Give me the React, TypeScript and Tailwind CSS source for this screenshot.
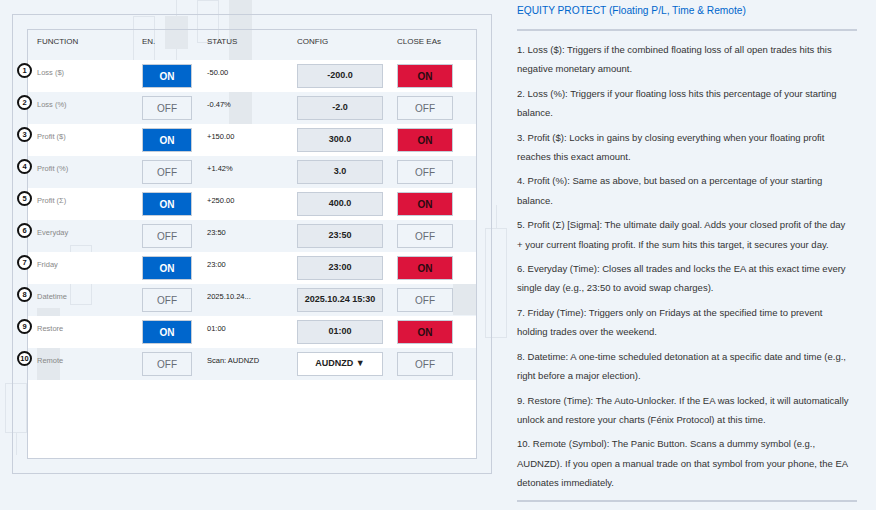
import React from 'react'

type Row = {
  n: number
  name: string
  en: boolean
  status: string
  config: string
  close: boolean
  select?: boolean
}

const rows: Row[] = [
  { n: 1, name: 'Loss ($)', en: true, status: '-50.00', config: '-200.0', close: true },
  { n: 2, name: 'Loss (%)', en: false, status: '-0.47%', config: '-2.0', close: false },
  { n: 3, name: 'Profit ($)', en: true, status: '+150.00', config: '300.0', close: true },
  { n: 4, name: 'Profit (%)', en: false, status: '+1.42%', config: '3.0', close: false },
  { n: 5, name: 'Profit (Σ)', en: true, status: '+250.00', config: '400.0', close: true },
  { n: 6, name: 'Everyday', en: false, status: '23:50', config: '23:50', close: false },
  { n: 7, name: 'Friday', en: true, status: '23:00', config: '23:00', close: true },
  { n: 8, name: 'Datetime', en: false, status: '2025.10.24...', config: '2025.10.24 15:30', close: false },
  { n: 9, name: 'Restore', en: true, status: '01:00', config: '01:00', close: true },
  { n: 10, name: 'Remote', en: false, status: 'Scan: AUDNZD', config: 'AUDNZD ▼', close: false, select: true },
]

const notes = [
  '1. Loss ($): Triggers if the combined floating loss of all open trades hits this negative monetary amount.',
  '2. Loss (%): Triggers if your floating loss hits this percentage of your starting balance.',
  '3. Profit ($): Locks in gains by closing everything when your floating profit reaches this exact amount.',
  '4. Profit (%): Same as above, but based on a percentage of your starting balance.',
  '5. Profit (Σ) [Sigma]: The ultimate daily goal. Adds your closed profit of the day + your current floating profit. If the sum hits this target, it secures your day.',
  '6. Everyday (Time): Closes all trades and locks the EA at this exact time every single day (e.g., 23:50 to avoid swap charges).',
  '7. Friday (Time): Triggers only on Fridays at the specified time to prevent holding trades over the weekend.',
  '8. Datetime: A one-time scheduled detonation at a specific date and time (e.g., right before a major election).',
  '9. Restore (Time): The Auto-Unlocker. If the EA was locked, it will automatically unlock and restore your charts (Fénix Protocol) at this time.',
  '10. Remote (Symbol): The Panic Button. Scans a dummy symbol (e.g., AUDNZD). If you open a manual trade on that symbol from your phone, the EA detonates immediately.',
]

// faint chart candles in the background: [left, top, width, height, filled, wickTop, wickBottom]
const candles: [number, number, number, number, boolean, number, number][] = [
  [133, 16, 22, 60, false, 0, 0],
  [165, 16, 23, 33, true, 16, 14],
  [197, 0, 22, 43, false, 0, 0],
  [229, 0, 23, 135, true, 0, 0],
  [70, 245, 22, 60, false, 0, 0],
  [37, 308, 23, 75, true, 0, 0],
  [5, 383, 22, 50, false, 0, 22],
  [453, 284, 23, 31, true, 0, 0],
  [485, 228, 22, 110, false, 23, 0],
]

const Badge = ({ n }: { n: number }) => (
  <div className='absolute left-[-11px] top-[3px] w-[15px] h-[15px] rounded-full bg-white border-2 border-[#111] flex items-center justify-center text-[7.5px] font-bold text-[#111] leading-none'>
    {n}
  </div>
)

const App = () => {
  return (
    <div className='relative w-[876px] h-[510px] bg-[#eff4f9] overflow-hidden font-["Liberation_Sans",Arial,sans-serif]'>
      <div className='absolute inset-0 pointer-events-none'>
        {candles.map(([l, t, w, h, filled, wt, wb], i) => (
          <div key={i} className='absolute' style={{ left: l, top: t - wt, width: w, height: h + wt + wb }}>
            {wt > 0 && <div className='mx-auto w-px bg-[#dfe5ec]' style={{ height: wt }} />}
            <div
              className={filled ? 'bg-[#e3e8ed]' : 'border border-[#dfe5ec]'}
              style={{ height: h }}
            />
            {wb > 0 && <div className='mx-auto w-px bg-[#dfe5ec]' style={{ height: wb }} />}
          </div>
        ))}
      </div>

      <div className='relative flex'>
        {/* left panel */}
        <div className='pl-[12px] pt-[14px]'>
          <div className='w-[480px] h-[460px] border border-[#c8cfdb] p-[14px]'>
            <div className='h-full border border-[#c8cfdb] flex flex-col'>
              <div className='h-[30px] flex items-start pt-[6px] text-[8px] text-[#333] uppercase'>
                <div className='w-[114px] pl-[9px]'>FUNCTION</div>
                <div className='w-[65px]'>EN.</div>
                <div className='w-[90px]'>STATUS</div>
                <div className='w-[100px]'>CONFIG</div>
                <div className='normal-case'>CLOSE EAs</div>
              </div>
              {rows.map((r) => (
                <div
                  key={r.n}
                  className={`relative h-[32px] flex items-center ${r.n % 2 === 1 ? 'bg-white' : ''}`}
                >
                  <Badge n={r.n} />
                  <div className='w-[114px] pl-[9px] pb-[6px] text-[7.5px] text-[#888]'>{r.name}</div>
                  <div className='w-[65px]'>
                    <div
                      className={`w-[50px] h-[24px] border border-[#c5cdd8] flex items-center justify-center text-[10px] ${
                        r.en ? 'bg-[#0066cc] text-white font-bold' : 'text-[#666c75]'
                      }`}
                    >
                      {r.en ? 'ON' : 'OFF'}
                    </div>
                  </div>
                  <div className='w-[90px] pb-[6px] text-[7.5px] text-[#222]'>{r.status}</div>
                  <div className='w-[100px]'>
                    <div
                      className={`w-[86px] h-[24px] border border-[#c5cdd8] flex items-center justify-center text-[9px] font-bold text-[#222] ${
                        r.select ? 'bg-white' : 'bg-[#e5eaf0]'
                      }`}
                    >
                      {r.config}
                    </div>
                  </div>
                  <div
                    className={`w-[56px] h-[24px] border border-[#c5cdd8] flex items-center justify-center text-[10px] ${
                      r.close ? 'bg-[#dc143c] text-[#2a0a10] font-bold' : 'text-[#666c75]'
                    }`}
                  >
                    {r.close ? 'ON' : 'OFF'}
                  </div>
                </div>
              ))}
              <div className='flex-1 bg-white' />
            </div>
          </div>
        </div>

        {/* right panel */}
        <div className='ml-[25px] w-[340px] pt-[4px]'>
          <div className='text-[10.2px] text-[#0066cc] leading-[14px]'>
            EQUITY PROTECT (Floating P/L, Time &amp; Remote)
          </div>
          <div className='mt-[11px] h-[2px] bg-[#c8cfdb]' />
          <div className='mt-[9px] pr-[5px] flex flex-col gap-[5px] text-[9.5px] text-[#333] leading-[19.4px]'>
            {notes.map((t, i) => (
              <p key={i}>{t}</p>
            ))}
          </div>
          <div className='mt-[7px] h-[2px] bg-[#c8cfdb]' />
        </div>
      </div>
    </div>
  )
}

export default App
